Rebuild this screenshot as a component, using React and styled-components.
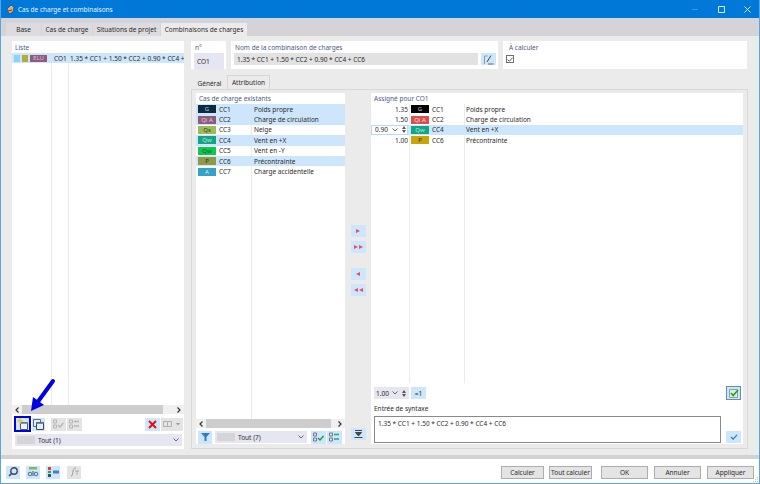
import React from 'react';
import styled, { createGlobalStyle } from 'styled-components';

const GlobalStyle = createGlobalStyle`
  html, body {
    margin: 0;
    padding: 0;
    background: #fff;
  }
  * {
    box-sizing: border-box;
  }
`;

const Window = styled.div`
  position: relative;
  width: 760px;
  height: 484px;
  overflow: hidden;
  display: flex;
  flex-direction: column;
  font-family: 'Noto Sans', 'Open Sans', sans-serif;
  font-size: 6.5px;
  color: #2b2b2b;
  background: #ebebeb;
  border-left: 1px solid #5aa5dc;
  border-right: 1px solid #5aa5dc;
  border-bottom: 1px solid #5aa5dc;
`;

const TitleBar = styled.div`
  height: 18px;
  margin: 0 -1px;
  padding: 0 9px 0 6px;
  flex: none;
  display: flex;
  align-items: center;
  background: #0078d7;
  color: #e8f3fc;
`;

const TitleText = styled.span`
  margin-left: 3px;
  flex: 1;
`;

const WinControls = styled.div`
  display: flex;
  align-items: center;
  gap: 19px;
`;

const TabBar = styled.div`
  height: 18px;
  flex: none;
  display: flex;
  align-items: flex-end;
  padding-left: 5px;
  gap: 1px;
  background: #d4d3d7;
`;

const Tab = styled.div`
  height: 13px;
  display: flex;
  align-items: center;
  justify-content: center;
  width: ${(p) => p.$w}px;
  background: ${(p) => (p.$active ? '#ebebeb' : '#dcdbdf')};
  white-space: nowrap;
`;

const Body = styled.div`
  flex: 1;
  min-height: 0;
  display: flex;
  gap: 7px;
  padding: 5px 11px 6px;
`;

const LeftPanel = styled.div`
  width: 172px;
  flex: none;
  display: flex;
  flex-direction: column;
  background: #fff;
`;

const Heading = styled.div`
  height: ${(p) => p.$h || 12}px;
  flex: none;
  padding-left: ${(p) => p.$pad || 3}px;
  display: flex;
  align-items: center;
  color: #4d5a85;
`;

const ListArea = styled.div`
  flex: 1;
  min-height: 0;
  overflow: hidden;
  background:
    linear-gradient(#ececec, #ececec) no-repeat ${(p) => p.$a}px 0 / 1px 100%,
    linear-gradient(#ececec, #ececec) no-repeat ${(p) => p.$b}px 0 / 1px 100%;
`;

const ComboRow = styled.div`
  height: 10px;
  display: flex;
  align-items: center;
  white-space: nowrap;
  background: #cde6fb;
`;

const Swatch = styled.span`
  width: 6px;
  height: 7px;
  margin-left: ${(p) => p.$ml}px;
  flex: none;
  background: ${(p) => p.$c};
`;

const EluBadge = styled.span`
  width: 17px;
  height: 7px;
  margin-left: 2px;
  flex: none;
  background: #8e5a80;
  color: #d8c8d4;
  font-size: 6px;
  line-height: 7px;
  text-align: center;
`;

const ComboId = styled.span`
  margin-left: 7px;
  width: 16px;
  flex: none;
`;

const ScrollBar = styled.div`
  height: 9px;
  flex: none;
  display: flex;
  align-items: center;
  justify-content: space-between;
  margin-bottom: ${(p) => p.$mb}px;
  padding-right: 3px;
  padding-left: 3px;
  background: #f0f0f0;
`;

const ScrollThumb = styled.div`
  height: 9px;
  flex: 1;
  margin: 0 ${(p) => p.$end}px 0 3px;
  background: #cdcdcd;
`;

const ToolRow = styled.div`
  height: ${(p) => p.$h || 15}px;
  flex: none;
  display: flex;
  align-items: center;
  padding-left: 2px;
`;

const IconButton = styled.div`
  width: ${(p) => p.$w || 15}px;
  height: ${(p) => p.$h || 13}px;
  margin-left: ${(p) => p.$ml || 0}px;
  flex: none;
  display: flex;
  align-items: center;
  justify-content: center;
  background: ${(p) => (p.$gray ? '#e4e4e4' : '#cde6fb')};
`;

const SelectedButton = styled(IconButton)`
  width: 17px;
  height: 16px;
  background: #cde6fb;
  border: 2px solid #0000e0;
`;

const Dropdown = styled.div`
  height: 12px;
  flex: none;
  display: flex;
  align-items: center;
  width: ${(p) => p.$w}px;
  margin: ${(p) => p.$m || '0'};
  padding: 0 3px 0 2px;
  background: #e6e6f2;
`;

const DropSwatch = styled.span`
  width: 18px;
  height: 8px;
  margin-right: 3px;
  background: #d5d5d5;
`;

const DropText = styled.span`
  flex: 1;
`;

const RightColumn = styled.div`
  flex: 1;
  min-width: 0;
  display: flex;
  flex-direction: column;
`;

const TopRow = styled.div`
  height: 28px;
  flex: none;
  display: flex;
  gap: 5px;
`;

const Card = styled.div`
  width: ${(p) => p.$w}px;
  padding: 0 2px 0 3px;
  background: #fff;
  display: flex;
  flex-direction: column;
`;

const CardRow = styled.div`
  display: flex;
  gap: 3px;
  align-items: center;
`;

const ReadField = styled.div`
  height: 12px;
  flex: 1;
  display: flex;
  align-items: center;
  padding-left: 3px;
  background: ${(p) => (p.$tint ? '#e6e6f2' : '#e2e2e2')};
`;

const CheckBox = styled.div`
  width: 8px;
  height: 8px;
  margin: 2px 0 0 0;
  display: flex;
  align-items: center;
  justify-content: center;
  border: 1px solid #6f6f6f;
`;

const SubTabs = styled.div`
  height: 14px;
  margin-top: 6px;
  flex: none;
  display: flex;
  align-items: flex-end;
  padding-left: 1px;
`;

const SubTab = styled.div`
  height: ${(p) => (p.$active ? 14 : 13)}px;
  width: ${(p) => p.$w}px;
  display: flex;
  align-items: center;
  justify-content: center;
  border: 1px solid ${(p) => (p.$active ? '#d6d6d6' : 'transparent')};
  border-bottom: none;
`;

const AssignPanel = styled.div`
  flex: 1;
  min-height: 0;
  display: flex;
  padding: 3px 4px 4px 4px;
  border: 1px solid #d8d8d8;
`;

const SourceBox = styled.div`
  width: 149px;
  flex: none;
  display: flex;
  flex-direction: column;
  background: #fff;
`;

const MoveColumn = styled.div`
  width: 26px;
  flex: none;
  display: flex;
  flex-direction: column;
  align-items: center;
  padding-top: 132px;
`;

const MoveButton = styled(IconButton)`
  height: 12px;
  margin-bottom: ${(p) => p.$mb || 4}px;
`;

const PushDown = styled.div`
  flex: 1;
`;

const TargetBox = styled.div`
  flex: 1;
  min-width: 0;
  display: flex;
  flex-direction: column;
  background: #fff;
`;

const LoadRow = styled.div`
  height: 10.4px;
  display: flex;
  align-items: center;
  white-space: nowrap;
  background: ${(p) => (p.$on ? '#cde6fb' : 'transparent')};
`;

const Badge = styled.span`
  width: 18px;
  height: 8px;
  margin-left: ${(p) => p.$ml}px;
  flex: none;
  background: ${(p) => p.$c};
  color: ${(p) => p.$fg};
  font-size: 6px;
  line-height: 8px;
  text-align: center;
`;

const Code = styled.span`
  width: ${(p) => p.$w}px;
  margin-left: 3px;
  flex: none;
`;

const Factor = styled.span`
  width: 37px;
  flex: none;
  text-align: right;
`;

const FactorInput = styled.div`
  width: 37px;
  height: 10.4px;
  flex: none;
  display: flex;
  align-items: center;
  padding-left: 3px;
  background: #fff;
  border: 1px solid #bcd9f2;
`;

const Grow = styled.span`
  flex: 1;
`;

const Spin = styled.span`
  display: flex;
  flex-direction: column;
  gap: 1px;
  margin: 0 1px 0 4px;
`;

const FactorBar = styled.div`
  height: 14px;
  margin: 3px 2px 0 3px;
  flex: none;
  display: flex;
  align-items: center;
`;

const FactorCombo = styled.div`
  width: 35px;
  height: 12px;
  display: flex;
  align-items: center;
  padding: 0 2px;
  background: #e6e6f2;
`;

const GreenCheck = styled.div`
  width: 15px;
  height: 14px;
  display: flex;
  align-items: center;
  justify-content: center;
  background: #cde6fb;
  border: 1px solid #5f8fb8;
`;

const SyntaxLabel = styled.div`
  height: 11px;
  margin: 3px 0 1px 3px;
  flex: none;
  display: flex;
  align-items: center;
`;

const SyntaxRow = styled.div`
  height: 28px;
  margin: 0 2px 1px 3px;
  flex: none;
  display: flex;
  align-items: flex-end;
`;

const SyntaxInput = styled.div`
  height: 27px;
  flex: 1;
  padding: 2px 3px;
  background: #fff;
  border: 1px solid #8a8a8a;
`;

const Footer = styled.div`
  height: 28px;
  flex: none;
  display: flex;
  align-items: center;
  padding: 2px 5px 0 5px;
  background: #fff;
  border-top: 4px solid #d2d2d2;
`;

const FooterButton = styled.div`
  width: ${(p) => p.$w}px;
  height: 13px;
  margin-left: ${(p) => p.$ml}px;
  flex: none;
  display: flex;
  align-items: center;
  justify-content: center;
  white-space: nowrap;
  background: #e4e4e4;
  border: 1px solid #adadad;
`;

const Arrow = styled.svg`
  position: absolute;
  left: 26px;
  top: 377px;
`;

const Grip = styled.svg`
  position: absolute;
  right: 1px;
  bottom: 1px;
`;

const Ico = ({ children, w = 11, h = 10 }) => (
  <svg width={w} height={h} viewBox={`0 0 ${w} ${h}`} fill="none">
    {children}
  </svg>
);

const Chevron = ({ c = '#666' }) => (
  <Ico w={6} h={4}>
    <path d="M.5.5 3 3 5.500.5" stroke={c} />
  </Ico>
);

const Tri = ({ up }) => (
  <Ico w={4} h={3}>
    <path d={up ? 'M2 0 4 3H0z' : 'M0 0h4L2 3z'} fill="#555" />
  </Ico>
);

const ScrollArrow = ({ left }) => (
  <Ico w={4} h={6}>
    <path d={left ? 'M3.500.5 1 3l2.500 2.500' : 'M.5.5 3 3 .5 5.500'} stroke="#333" strokeWidth="1.2" />
  </Ico>
);

const NewIcon = () => (
  <Ico w={12} h={12}>
    <path d="M3.500 4.500h7v7h-7z" fill="#e8f4fc" stroke="#555" />
    <path d="M3.500 4.500h7v1.500h-7z" fill="#7f9ab3" />
    <path d="M3 0v5.500M.3 2.800h5.400" stroke="#e7c94a" strokeWidth="1.800" />
  </Ico>
);

const CopyIcon = () => (
  <Ico w={11} h={11}>
    <path d="M.5.5h7v7h-7z" fill="#dff0fb" stroke="#667" />
    <path d="M3.500 3.500h7v7h-7z" fill="#dff0fb" stroke="#445" />
    <path d="M3.500 3.500h7v1.500h-7z" fill="#6f8fae" />
  </Ico>
);

const CheckListIcon = ({ c = '#b5b5b5', swap, box = '#b5b5b5' }) => (
  <Ico>
    <path d="M.5 1h3v3h-3zM.5 6h3v3h-3z" stroke={box} />
    {swap ? (
      <path d="M5 2.500h5M5 7h5" stroke={c} strokeWidth="1.300" />
    ) : (
      <path d="M5 6l2 2 3.500-4" stroke={c} strokeWidth="1.300" />
    )}
  </Ico>
);

const MoveIcon = ({ dir, double }) => {
  const single = dir === 'r' ? 'M0 1l4 2-4 2z' : 'M4 1 0 3l4 2z';
  return (
    <Ico w={double ? 9 : 4} h={6}>
      <path d={single} fill="#e2505f" />
      {double && <path d={single} fill="#e2505f" transform="translate(5 0)" />}
    </Ico>
  );
};

const PencilIcon = () => (
  <Ico w={11} h={11}>
    <path d="M1.500 2v8M1.500 2h3" stroke="#8a9aaa" />
    <path d="M4 8 8 1.500" stroke="#444" />
    <path d="M5 10h5.500" stroke="#666" />
  </Ico>
);

const TickMark = ({ c = '#555', w = 6, h = 5 }) => (
  <svg width={w} height={h} viewBox="0 0 6 5" fill="none">
    <path d="M.5 2.500 2.300 4.300 5.500.7" stroke={c} />
  </svg>
);

const sourceLoads = [
  { tag: 'G', c: '#0d2a45', fg: '#b9c4ce', code: 'CC1', name: 'Poids propre', on: true },
  { tag: 'Qi A', c: '#8e5a80', fg: '#ddcfd9', code: 'CC2', name: 'Charge de circulation', on: true },
  { tag: 'Qs', c: '#9dbb5a', fg: '#35401c', code: 'CC3', name: 'Neige' },
  { tag: 'Qw', c: '#12a585', fg: '#bfe8de', code: 'CC4', name: 'Vent en +X', on: true },
  { tag: 'Qw', c: '#0dc94f', fg: '#0d5a28', code: 'CC5', name: 'Vent en -Y' },
  { tag: 'P', c: '#8f9a42', fg: '#2d3010', code: 'CC6', name: 'Précontrainte', on: true },
  { tag: 'A', c: '#2fa3c8', fg: '#d5eef6', code: 'CC7', name: 'Charge accidentelle' },
];

const assigned = [
  { factor: '1.35', tag: 'G', c: '#000', fg: '#ccc', code: 'CC1', name: 'Poids propre' },
  { factor: '1.50', tag: 'Qi A', c: '#d84f4f', fg: '#f7d5d5', code: 'CC2', name: 'Charge de circulation' },
  { factor: '0.90', tag: 'Qw', c: '#12a585', fg: '#bfe8de', code: 'CC4', name: 'Vent en +X', on: true },
  { factor: '1.00', tag: 'P', c: '#c9a606', fg: '#332a00', code: 'CC6', name: 'Précontrainte' },
];

const syntax = '1.35 * CC1 + 1.50 * CC2 + 0.90 * CC4 + CC6';

const App = () => (
  <Window>
    <GlobalStyle />
    <TitleBar>
      <Ico w={9} h={11}>
        <path d="M1 5l4-4 3 2-1 5-4 2z" fill="#c9b98a" stroke="#33475c" strokeWidth="0.800" />
        <path d="M2 7l4-1" stroke="#8a2f2f" />
      </Ico>
      <TitleText>Cas de charge et combinaisons</TitleText>
      <WinControls>
        <Ico w={7} h={7}>
          <path d="M0 3.500h6" stroke="#3a97e2" />
        </Ico>
        <Ico w={7} h={7}>
          <path d="M.5.5h6v6h-6z" stroke="#d8ecfa" />
        </Ico>
        <Ico w={7} h={7}>
          <path d="M.5.5l6 6M6.500.5l-6 6" stroke="#d8ecfa" />
        </Ico>
      </WinControls>
    </TitleBar>

    <TabBar>
      <Tab $w={35}>Base</Tab>
      <Tab $w={50}>Cas de charge</Tab>
      <Tab $w={67}>Situations de projet</Tab>
      <Tab $w={86} $active>Combinaisons de charges</Tab>
    </TabBar>

    <Body>
      <LeftPanel>
        <Heading>Liste</Heading>
        <ListArea $a={39} $b={56}>
          <ComboRow>
            <Swatch $c="#8dd3f5" $ml={2} />
            <Swatch $c="#b0ad3c" $ml={2} />
            <EluBadge>ELU</EluBadge>
            <ComboId>CO1</ComboId>
            1.35 * CC1 + 1.50 * CC2 + 0.90 * CC4 +
          </ComboRow>
        </ListArea>
        <ScrollBar $mb={2}>
          <ScrollArrow left />
          <ScrollThumb $end={14} />
          <ScrollArrow />
        </ScrollBar>
        <ToolRow $h={16}>
          <SelectedButton>
            <NewIcon />
          </SelectedButton>
          <IconButton $w={13} $h={13} $ml={1}>
            <CopyIcon />
          </IconButton>
          <IconButton $gray $ml={6}>
            <CheckListIcon />
          </IconButton>
          <IconButton $gray $ml={1}>
            <CheckListIcon swap />
          </IconButton>
          <IconButton $ml={63}>
            <Ico w={9} h={9}>
              <path d="M1 1l7 7M8 1 1 8" stroke="#e01010" strokeWidth="2" />
            </Ico>
          </IconButton>
          <IconButton $gray $w={22} $ml={1}>
            <Ico w={18} h={7}>
              <path d="M.5.5h4v5h-4zM4.500.5h4v5h-4z" stroke="#b0b0b0" />
              <path d="M13 2h4l-2 2.500z" fill="#999" />
            </Ico>
          </IconButton>
        </ToolRow>
        <Dropdown $w={167} $m="2px 0 3px 3px">
          <DropSwatch />
          <DropText>Tout (1)</DropText>
          <Chevron />
        </Dropdown>
      </LeftPanel>

      <RightColumn>
        <TopRow>
          <Card $w={35}>
            <Heading $pad={1}>n°</Heading>
            <ReadField $tint>CO1</ReadField>
          </Card>
          <Card $w={267}>
            <Heading $pad={1}>Nom de la combinaison de charges</Heading>
            <CardRow>
              <ReadField>{syntax}</ReadField>
              <IconButton $h={12}>
                <PencilIcon />
              </IconButton>
            </CardRow>
          </Card>
          <Card $w={244}>
            <Heading $pad={0}>À calculer</Heading>
            <CheckBox>
              <TickMark />
            </CheckBox>
          </Card>
        </TopRow>

        <SubTabs>
          <SubTab $w={35}>Général</SubTab>
          <SubTab $w={43} $active>Attribution</SubTab>
        </SubTabs>

        <AssignPanel>
          <SourceBox>
            <Heading $h={11} $pad={3}>Cas de charge existants</Heading>
            <ListArea $a={55} $b={200}>
              {sourceLoads.map((l) => (
                <LoadRow key={l.code} $on={l.on}>
                  <Badge $ml={2} $c={l.c} $fg={l.fg}>{l.tag}</Badge>
                  <Code $w={35}>{l.code}</Code>
                  {l.name}
                </LoadRow>
              ))}
            </ListArea>
            <ScrollBar $mb={2}>
              <ScrollArrow left />
              <ScrollThumb $end={7} />
              <ScrollArrow />
            </ScrollBar>
            <ToolRow $h={14}>
              <IconButton $w={14}>
                <Ico w={9} h={8}>
                  <path d="M0 0h9L5.500 4v4h-2V4z" fill="#2f7fc1" />
                </Ico>
              </IconButton>
              <Dropdown $w={92} $m="0 0 0 3px">
                <DropSwatch />
                <DropText>Tout (7)</DropText>
                <Chevron />
              </Dropdown>
              <IconButton $ml={4}>
                <CheckListIcon c="#1a9a3a" box="#778" />
              </IconButton>
              <IconButton $ml={1}>
                <CheckListIcon c="#2aa87a" box="#778" swap />
              </IconButton>
            </ToolRow>
          </SourceBox>

          <MoveColumn>
            <MoveButton><MoveIcon dir="r" /></MoveButton>
            <MoveButton $mb={15}><MoveIcon dir="r" double /></MoveButton>
            <MoveButton><MoveIcon dir="l" /></MoveButton>
            <MoveButton><MoveIcon dir="l" double /></MoveButton>
            <PushDown />
            <MoveButton $mb={0}>
              <Ico w={9} h={8}>
                <path d="M1 .5h7M4.500 6 1.500 2.500h6z" stroke="#444" fill="#444" />
                <path d="M.5 7.500h8" stroke="#444" />
              </Ico>
            </MoveButton>
          </MoveColumn>

          <TargetBox>
            <Heading $h={11} $pad={3}>Assigné pour CO1</Heading>
            <ListArea $a={38} $b={93}>
              {assigned.map((l) => (
                <LoadRow key={l.code} $on={l.on}>
                  {l.on ? (
                    <FactorInput>
                      {l.factor}
                      <Grow />
                      <Chevron />
                      <Spin>
                        <Tri up />
                        <Tri />
                      </Spin>
                    </FactorInput>
                  ) : (
                    <Factor>{l.factor}</Factor>
                  )}
                  <Badge $ml={3} $c={l.c} $fg={l.fg}>{l.tag}</Badge>
                  <Code $w={34}>{l.code}</Code>
                  {l.name}
                </LoadRow>
              ))}
            </ListArea>
            <FactorBar>
              <FactorCombo>
                1.00
                <Grow />
                <Chevron />
                <Spin>
                  <Tri up />
                  <Tri />
                </Spin>
              </FactorCombo>
              <IconButton $ml={2} $h={12}>=1</IconButton>
              <Grow />
              <GreenCheck>
                <Ico w={10} h={9}>
                  <path d="M.5.5h8v8h-8z" fill="#d8f3d0" stroke="#9a9a9a" />
                  <path d="M2 4l2.200 2.500L9 1" stroke="#18a030" strokeWidth="1.500" />
                </Ico>
              </GreenCheck>
            </FactorBar>
            <SyntaxLabel>Entrée de syntaxe</SyntaxLabel>
            <SyntaxRow>
              <SyntaxInput>{syntax}</SyntaxInput>
              <IconButton $ml={5} $h={12}>
                <TickMark c="#3a78b5" w={8} h={6} />
              </IconButton>
            </SyntaxRow>
          </TargetBox>
        </AssignPanel>
      </RightColumn>
    </Body>

    <Footer>
      <IconButton $w={14}>
        <Ico>
          <circle cx="6" cy="4" r="3.200" stroke="#445" strokeWidth="1.400" />
          <path d="M3.500 6.500 1 9" stroke="#445" strokeWidth="1.600" />
        </Ico>
      </IconButton>
      <IconButton $w={14} $ml={6}>
        <Ico w={12} h={10}>
          <path d="M2 0h8v2.500H2z" fill="#7fb860" />
          <circle cx="3" cy="7" r="1.800" stroke="#4a6a94" />
          <circle cx="9" cy="7" r="1.800" stroke="#4a6a94" />
          <path d="M6 4v5" stroke="#555" />
        </Ico>
      </IconButton>
      <IconButton $w={14} $ml={6}>
        <Ico w={12} h={10}>
          <path d="M1 0h3v3H1z" fill="#d8413a" />
          <path d="M1 4h3v2H1z" fill="#3d9a4a" />
          <path d="M1 7h3v3H1z" fill="#33507a" />
          <path d="M6 3.500h6v3H6z" fill="#4a7fb5" />
        </Ico>
      </IconButton>
      <IconButton $gray $w={14} $ml={7}>
        <Ico>
          <path d="M2 9c2 0 1.500-3 2-5s1-3 3-3" stroke="#999" />
          <path d="M6 4h4M8 4v4" stroke="#aaa" />
        </Ico>
      </IconButton>
      <Grow />
      <FooterButton $w={43}>Calculer</FooterButton>
      <FooterButton $w={43} $ml={5}>Tout calculer</FooterButton>
      <FooterButton $w={47} $ml={9}>OK</FooterButton>
      <FooterButton $w={47} $ml={6}>Annuler</FooterButton>
      <FooterButton $w={47} $ml={6}>Appliquer</FooterButton>
    </Footer>

    <Grip width="5" height="5" viewBox="0 0 5 5">
      <path d="M4 0h1v1H4zM2 2h1v1H2zM4 2h1v1H4zM0 4h1v1H0zM2 4h1v1H2zM4 4h1v1H4z" fill="#c4c4c4" />
    </Grip>

    <Arrow width="30" height="36" viewBox="0 0 30 36">
      <path d="M26 4 10 26" stroke="#0000e0" strokeWidth="4" strokeLinecap="round" />
      <path d="M4 34 6 20 17 28z" fill="#0000e0" />
    </Arrow>
  </Window>
);

export default App;
